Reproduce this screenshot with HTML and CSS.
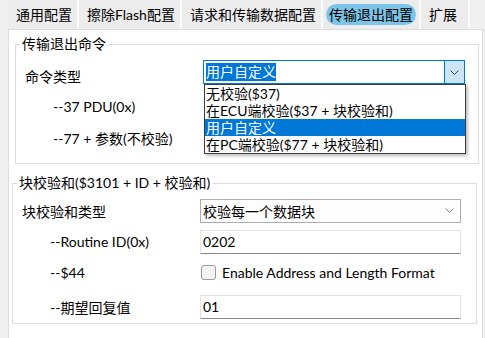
FILE: index.html
```html
<!DOCTYPE html>
<html lang="zh-CN">
<head>
    <meta charset="UTF-8">
    <title>传输退出配置</title>
    <link rel="stylesheet" href="styles.css">
</head>
<body>
    <div class="tabs">
        <div class="tab">通用配置</div>
        <div class="tab">擦除Flash配置</div>
        <div class="tab">请求和传输数据配置</div>
        <div class="tab active"><span>传输退出配置</span></div>
        <div class="tab">扩展</div>
    </div>

    <div class="panel">
        <!-- exit command -->
        <fieldset class="group group-exit">
            <legend>传输退出命令</legend>
            <div class="row">
                <div class="label">命令类型</div>
                <div class="combo focus">
                    <span class="combo-text"><span class="sel">用户自定义</span></span>
                    <span class="combo-btn">
                        <svg width="9" height="5" viewBox="0 0 9 5"><path d="M0.5 0.5 L4.5 4.5 L8.5 0.5" fill="none" stroke="#444" stroke-width="1"/></svg>
                    </span>
                    <div class="dropdown">
                        <div class="item">无校验($37)</div>
                        <div class="item">在ECU端校验($37 + 块校验和)</div>
                        <div class="item hl">用户自定义</div>
                        <div class="item">在PC端校验($77 + 块校验和)</div>
                    </div>
                </div>
            </div>
            <div class="row">
                <div class="label indent">--37 PDU(0x)</div>
            </div>
            <div class="row">
                <div class="label indent">--77 + 参数(不校验)</div>
            </div>
        </fieldset>

        <!-- block checksum -->
        <fieldset class="group group-sum">
            <legend>块校验和($3101 + ID + 校验和)</legend>
            <div class="row">
                <div class="label">块校验和类型</div>
                <div class="combo plain">
                    <span class="combo-text">校验每一个数据块</span>
                    <span class="combo-arrow">
                        <svg width="9" height="5" viewBox="0 0 9 5"><path d="M0.5 0.5 L4.5 4.5 L8.5 0.5" fill="none" stroke="#888" stroke-width="1"/></svg>
                    </span>
                </div>
            </div>
            <div class="row">
                <div class="label indent">--Routine ID(0x)</div>
                <div class="field">0202</div>
            </div>
            <div class="row">
                <div class="label indent">--$44</div>
                <label class="check"><span class="box"></span>Enable Address and Length Format</label>
            </div>
            <div class="row last">
                <div class="label indent">--期望回复值</div>
                <div class="field">01</div>
            </div>
        </fieldset>
    </div>
</body>
</html>
```

FILE: styles.css
```css
body {
    margin: 0;
    background-color: #f0f0f0;
    font-family: Lato, "Noto Sans CJK SC", sans-serif;
    font-size: 14px;
    color: #000;
    width: 485px;
    height: 338px;
    overflow: hidden;
}
.tabs {
    display: flex;
    height: 29px;
    padding-left: 8px;
}
.tab {
    display: flex;
    align-items: center;
    padding: 0 5px 1px 8px;
    background-color: #ececec;
    border-right: 2px solid #fafafa;
    white-space: nowrap;
}
.tab:last-child {
    padding-right: 11px;
}
.tab.active {
    padding: 0 3px 1px 3px;
}
.tab.active span {
    background-color: #7cc4e8;
    border-radius: 11px;
    padding: 0 3px;
    line-height: 21px;
}
.panel {
    margin: 0 2px 0 8px;
    background-color: #fff;
    border: 1px solid #dcdcdc;
    height: 320px;
    box-sizing: border-box;
    padding: 6px 3px 0 6px;
}
.group {
    border: 1px solid #dcdcdc;
    margin: 0;
}
.group legend {
    padding: 0 2px;
    margin-left: 4px;
    line-height: 16px;
}
.group-exit {
    padding: 8px 0 10px 0;
}
.group-sum {
    margin: 11px 2px 0 -3px;
    padding: 4px 0 1px 0;
}
.row {
    display: flex;
    align-items: center;
    height: 31px;
}
.row.last {
    margin-top: 3px;
}
.label {
    width: 187px;
    box-sizing: border-box;
    padding-left: 9px;
    white-space: nowrap;
}
.label.indent {
    padding-left: 37px;
}
.combo {
    position: relative;
    display: flex;
    width: 262px;
    height: 24px;
    box-sizing: border-box;
}
.combo.focus {
    border: 1px solid #0078d7;
    background-color: #fff;
    margin-bottom: 7px;
}
.combo-text {
    flex: 1;
    display: flex;
    align-items: center;
    padding-left: 2px;
}
.sel {
    background-color: #0078d7;
    color: #fff;
    line-height: 18px;
}
.combo-btn {
    width: 19px;
    background-color: #cce4f7;
    border-left: 1px solid #0078d7;
    display: flex;
    align-items: center;
    justify-content: center;
}
.dropdown {
    position: absolute;
    top: 23px;
    left: 0;
    width: 260px;
    background-color: #fff;
    border: 1px solid #3c3c3c;
    box-shadow: 2px 2px 3px rgba(0, 0, 0, 0.25);
    z-index: 2;
}
.item {
    height: 17px;
    line-height: 17px;
    padding-left: 1px;
    white-space: nowrap;
}
.item.hl {
    background-color: #0078d7;
    color: #fff;
}
.combo.plain {
    width: 261px;
    border: 1px solid #adadad;
    background-color: #fdfdfd;
}
.combo-arrow {
    width: 22px;
    display: flex;
    align-items: center;
    justify-content: center;
}
.field {
    width: 261px;
    height: 24px;
    box-sizing: border-box;
    border: 1px solid #e3e3e3;
    border-bottom-color: #8a8a8a;
    padding-left: 2px;
    display: flex;
    align-items: center;
}
.check {
    display: flex;
    align-items: center;
    gap: 6px;
    padding-left: 1px;
}
.box {
    width: 13px;
    height: 13px;
    border: 1px solid #9a9a9a;
    border-radius: 3px;
    background-color: #f4f4f4;
}
```
